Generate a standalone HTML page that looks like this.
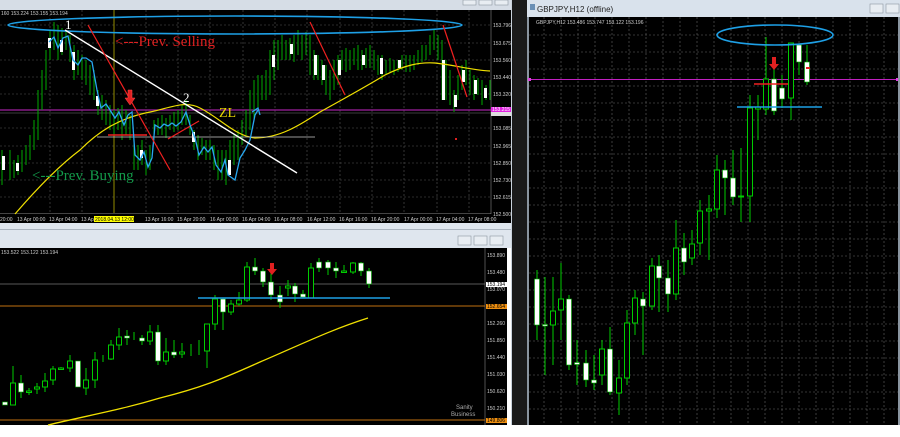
<!DOCTYPE html>
<html><head><meta charset="utf-8"><style>
html,body{margin:0;padding:0;background:#fff;width:900px;height:437px;overflow:hidden}
svg{display:block}
text{font-family:"Liberation Sans",sans-serif}
text.sf{font-family:"Liberation Serif",serif}
</style></head><body>
<svg width="900" height="437" viewBox="0 0 900 437" xmlns="http://www.w3.org/2000/svg">
<rect x="0" y="0" width="900" height="437" fill="#fff"/>
<rect x="0" y="0" width="527" height="10" fill="#d6dde6"/>
<rect x="0" y="10" width="491" height="204" fill="#000"/>
<rect x="491" y="10" width="20" height="213" fill="#000"/>
<rect x="0" y="213" width="491" height="10" fill="#000"/>
<rect x="511" y="0" width="16" height="425" fill="#c9d2dc"/>
<rect x="0" y="223" width="511" height="25" fill="#dfe6ee"/>
<rect x="0" y="229" width="511" height="1" fill="#aab4bf"/>
<g fill="#e8edf2" stroke="#8c96a0" stroke-width="0.6"><rect x="458" y="236" width="13" height="9"/><rect x="474" y="236" width="13" height="9"/><rect x="490" y="236" width="13" height="9"/>
<rect x="463" y="0" width="13" height="5"/><rect x="479" y="0" width="13" height="5"/><rect x="495" y="0" width="13" height="5"/></g>
<rect x="0" y="248" width="507" height="177" fill="#000"/>
<rect x="512" y="0" width="15" height="425" fill="#1a1a1a"/>
<rect x="527" y="0" width="373" height="17" fill="#d9e2ec"/>
<text x="537" y="12" font-size="8" fill="#222">GBPJPY,H12 (offline)</text>
<rect x="530" y="4" width="5" height="6" fill="#6a8fb5"/>
<rect x="870" y="4" width="13" height="9" fill="#e8edf2" stroke="#8c96a0" stroke-width="0.6"/>
<rect x="886" y="4" width="13" height="9" fill="#e8edf2" stroke="#8c96a0" stroke-width="0.6"/>
<rect x="527" y="17" width="373" height="408" fill="#000"/>
<rect x="527" y="17" width="2" height="408" fill="#8a95a0"/>

<g stroke="#555" stroke-width="0.6" stroke-dasharray="2,2">
<line x1="0" y1="25" x2="491" y2="25"/><line x1="0" y1="43" x2="491" y2="43"/><line x1="0" y1="60" x2="491" y2="60"/><line x1="0" y1="77" x2="491" y2="77"/><line x1="0" y1="94" x2="491" y2="94"/><line x1="0" y1="128" x2="491" y2="128"/><line x1="0" y1="146" x2="491" y2="146"/><line x1="0" y1="163" x2="491" y2="163"/><line x1="0" y1="180" x2="491" y2="180"/><line x1="0" y1="197" x2="491" y2="197"/>
<line x1="50" y1="10" x2="50" y2="213"/><line x1="82" y1="10" x2="82" y2="213"/><line x1="146" y1="10" x2="146" y2="213"/><line x1="178" y1="10" x2="178" y2="213"/><line x1="210" y1="10" x2="210" y2="213"/><line x1="243" y1="10" x2="243" y2="213"/><line x1="275" y1="10" x2="275" y2="213"/><line x1="307" y1="10" x2="307" y2="213"/><line x1="340" y1="10" x2="340" y2="213"/><line x1="372" y1="10" x2="372" y2="213"/><line x1="404" y1="10" x2="404" y2="213"/><line x1="437" y1="10" x2="437" y2="213"/><line x1="469" y1="10" x2="469" y2="213"/>
</g>
<line x1="491" y1="10" x2="491" y2="214" stroke="#888" stroke-width="0.6"/>
<line x1="0" y1="213.5" x2="491" y2="213.5" stroke="#888" stroke-width="0.6"/>
<text x="1" y="15" font-size="5" fill="#ccc">160 153.224 153.155 153.194</text>
<line x1="114" y1="10" x2="114" y2="213" stroke="#b8b000" stroke-width="0.8"/>
<g font-size="5" fill="#ccc">
<text x="493" y="27">153.796</text><text x="493" y="45">153.675</text><text x="493" y="62">153.560</text><text x="493" y="79">153.440</text><text x="493" y="96">153.320</text><text x="493" y="130">153.085</text><text x="493" y="148">152.965</text><text x="493" y="165">152.850</text><text x="493" y="182">152.730</text><text x="493" y="199">152.615</text><text x="493" y="216">152.500</text>
</g>
<rect x="491" y="107" width="20" height="5" fill="#e020e0"/>
<text x="492" y="111" font-size="5" fill="#fff">153.215</text>
<rect x="491" y="112" width="20" height="4" fill="#ddd"/>
<g font-size="5" fill="#ccc">
<text x="0" y="221">20:00</text><text x="17" y="221">13 Apr 00:00</text><text x="49" y="221">13 Apr 04:00</text><text x="81" y="221">13 Ap</text><text x="113" y="221">:00</text><text x="145" y="221">13 Apr 16:00</text><text x="177" y="221">15 Apr 20:00</text><text x="210" y="221">16 Apr 00:00</text><text x="242" y="221">16 Apr 04:00</text><text x="274" y="221">16 Apr 08:00</text><text x="307" y="221">16 Apr 12:00</text><text x="339" y="221">16 Apr 16:00</text><text x="371" y="221">16 Apr 20:00</text><text x="404" y="221">17 Apr 00:00</text><text x="436" y="221">17 Apr 04:00</text><text x="468" y="221">17 Apr 08:00</text>
</g>
<rect x="94" y="216" width="40" height="6" fill="#ffff00"/>
<text x="95" y="221" font-size="5" fill="#000">2018.04.13 12:00</text>

<line x1="0" y1="110" x2="491" y2="110" stroke="#a020a0" stroke-width="1.2"/>
<line x1="0" y1="113" x2="491" y2="113" stroke="#777" stroke-width="0.6"/>

<g stroke="#0a0" stroke-width="1">
<path d="M2 150V185M10 150V180M14 160V178M18 155V175M22 150V172M26 145V165M30 135V160M34 120V150M38 90V140M42 70V110M46 50V90M50 30V60M54 22V50M58 25V60M62 28V55M66 30V50M70 35V62M74 45V80M78 50V75M82 55V80M86 60V85M90 65V95M94 70V100M98 90V115M102 95V120M106 100V125M110 105V130M114 110V135M118 108V130M122 105V140M126 110V135M130 115V140M134 140V170M138 145V170M142 140V165M146 150V175M150 145V170M154 120V140M158 118V135M162 115V135M166 118V138M170 115V130M174 112V132M178 110V130M182 105V125M186 100V125M190 115V135M194 130V150M198 135V160M202 138V155M206 140V160M210 140V160M214 145V170M218 150V180M222 150V180M226 150V185M230 140V175M234 135V165M238 130V160M242 120V145M246 110V135M250 90V130M254 80V120M258 75V110M262 75V100M266 70V100M270 50V95M274 40V80M278 40V70M282 35V60M286 40V60M290 38V60M294 35V62M298 30V55M302 35V60M306 32V55M310 35V75M314 50V80M318 55V80M322 60V85M326 65V95M330 70V100M334 60V90M338 55V85M342 50V70M346 48V72M350 50V70M354 48V65M358 45V70M362 50V70M366 48V68M370 45V68M374 50V70M378 55V75M382 55V80M386 60V75M390 58V72M394 60V75M398 60V72M402 55V70M406 55V72M410 55V72M414 55V70M418 50V65M422 45V62M426 45V60M430 35V55M434 30V50M438 35V60M442 40V100M446 60V100M450 70V105M454 90V112M458 75V100M462 65V90M466 60V85M470 70V95M474 75V100M478 78V95M482 80V105M486 85V100M490 80V100"/>
</g>
<g fill="#fff">
<rect x="2" y="156" width="3" height="14"/><rect x="16" y="163" width="3" height="8"/><rect x="48" y="38" width="3" height="10"/><rect x="60" y="40" width="3" height="12"/><rect x="72" y="52" width="3" height="18"/><rect x="96" y="96" width="3" height="10"/><rect x="140" y="150" width="3" height="8"/><rect x="192" y="132" width="3" height="10"/><rect x="228" y="160" width="3" height="15"/><rect x="272" y="55" width="3" height="12"/><rect x="290" y="44" width="3" height="10"/><rect x="314" y="55" width="3" height="20"/><rect x="322" y="65" width="3" height="15"/><rect x="338" y="60" width="3" height="15"/><rect x="362" y="55" width="3" height="10"/><rect x="380" y="58" width="3" height="16"/><rect x="398" y="60" width="3" height="8"/><rect x="442" y="60" width="3" height="40"/><rect x="454" y="95" width="3" height="12"/><rect x="462" y="70" width="3" height="12"/><rect x="474" y="80" width="3" height="14"/><rect x="484" y="88" width="3" height="10"/>
</g>

<ellipse cx="235" cy="25" rx="227" ry="9" fill="none" stroke="#1ea0e6" stroke-width="1.6"/>
<path d="M15 214 C40 185 60 165 80 150 C100 130 120 118 150 112 C170 108 185 100 200 108 C220 118 235 136 255 138 C280 138 300 125 320 112 C345 98 360 90 385 75 C405 65 420 62 435 63 C455 65 470 70 490 71" fill="none" stroke="#f0e000" stroke-width="1.2"/>
<line x1="97" y1="137" x2="315" y2="137" stroke="#ccc" stroke-width="0.8"/>
<line x1="108" y1="135" x2="147" y2="135" stroke="#f02020" stroke-width="1.4"/>
<line x1="168" y1="139" x2="199" y2="121" stroke="#f02020" stroke-width="1.2"/>
<path d="M49 42L54 37L58 48L63 38L68 36L73 60L78 65L82 58L86 58L92 62L97 90L101 108L106 104L110 110L115 118L119 112L124 125L128 115L132 112L135 155L140 160L144 152L148 167L152 158L155 125L160 128L164 124L168 126L172 123L176 126L181 122L186 112L190 125L195 138L199 155L204 147L208 152L212 147L216 165L221 172L225 160L228 175L235 180L240 158L245 150L250 140L255 115L258 110" fill="none" stroke="#28a8f0" stroke-width="1.3"/>
<path d="M252 112L258 108L260 115" fill="none" stroke="#28a8f0" stroke-width="1.3"/>
<line x1="65" y1="30" x2="297" y2="173" stroke="#fff" stroke-width="1.4"/>
<g stroke="#f02020" stroke-width="1.2" fill="none">
<path d="M88 25L170 170"/><path d="M310 22L345 95"/><path d="M443 25L467 97"/>
</g>
<path d="M128 90h4v8h3l-5 7l-5-7h3z" fill="#e02020" stroke="#ff5050" stroke-width="0.5"/>
<text class="sf" x="65" y="29" font-size="13" fill="#fff">1</text>
<text class="sf" x="183" y="102" font-size="13" fill="#fff">2</text>
<text class="sf" x="115" y="46" font-size="15" fill="#e02020">&lt;---Prev. Selling</text>
<text class="sf" x="32" y="180" font-size="15" fill="#139a4a">&lt;---Prev. Buying</text>
<text class="sf" x="219" y="117" font-size="14" fill="#e8d800">ZL</text>
<rect x="455" y="138" width="2" height="2" fill="#e02020"/>

<g font-size="5" fill="#ccc">
<text x="1" y="254">153.522 153.122 153.194</text>
<text x="487" y="257">153.890</text><text x="487" y="274">153.480</text><text x="487" y="291">153.070</text><text x="487" y="325">152.260</text><text x="487" y="342">151.850</text><text x="487" y="359">151.440</text><text x="487" y="376">151.030</text><text x="487" y="393">150.620</text><text x="487" y="410">150.210</text>
</g>
<line x1="485" y1="248" x2="485" y2="425" stroke="#888" stroke-width="0.6"/>
<line x1="0" y1="284" x2="485" y2="284" stroke="#777" stroke-width="0.7"/>
<line x1="0" y1="306" x2="485" y2="306" stroke="#c07010" stroke-width="0.9"/>
<line x1="0" y1="420" x2="485" y2="420" stroke="#c07010" stroke-width="0.9"/>
<rect x="486" y="282" width="21" height="5" fill="#fff"/><text x="487" y="286" font-size="5" fill="#000">153.194</text>
<rect x="486" y="304" width="21" height="5" fill="#f09010"/><text x="487" y="308" font-size="5" fill="#000">152.654</text>
<rect x="486" y="418" width="21" height="5" fill="#f09010"/><text x="487" y="422" font-size="5" fill="#000">149.806</text>
<path d="M48 425 C90 415 120 410 160 398 C200 388 220 380 260 362 C300 345 330 330 368 318" fill="none" stroke="#f0e000" stroke-width="1.3"/>
<g stroke="#0c0" stroke-width="1" fill="#000">
<path d="M13 366V405M21 375V398M29 388V395M37 383V394M45 373V392M53 366V385M61 367V370M70 355V372M86 368V395M95 352V388M103 355V362M111 340V360M119 328V350M127 330V345M134 332V340M142 335V345M150 325V345M158 325V365M166 338V365M174 340V358M182 343V358M191 344V356M199 340V355M207 330V368M215 295V330M223 298V330M231 300V315M239 292V306M247 262V302M255 258V275M263 268V287M271 272V300M280 286V308M288 280V296M295 283V302M303 290V298M311 263V298M319 258V272M328 260V275M336 262V278M344 265V273M353 262V274M361 262V276M369 268V288"/>
<rect x="10.5" y="383" width="5" height="22"/><rect x="26.5" y="391" width="5" height="1.5"/><rect x="34.5" y="387" width="5" height="2"/><rect x="42.5" y="381" width="5" height="6"/><rect x="50.5" y="369" width="5" height="11"/><rect x="58.5" y="368" width="5" height="1.5"/><rect x="67.5" y="361" width="5" height="7"/><rect x="83.5" y="380" width="5" height="8"/><rect x="92.5" y="360" width="5" height="20"/><rect x="108.5" y="345" width="5" height="14"/><rect x="116.5" y="337" width="5" height="8"/><rect x="147.5" y="332" width="5" height="9"/><rect x="163.5" y="352" width="5" height="9"/><rect x="179.5" y="352" width="5" height="2"/><rect x="204.5" y="324" width="5" height="27"/><rect x="212.5" y="299" width="5" height="25"/><rect x="228.5" y="304" width="5" height="8"/><rect x="236.5" y="300" width="5" height="4"/><rect x="244.5" y="267" width="5" height="33"/><rect x="285.5" y="286" width="5" height="2"/><rect x="308.5" y="268" width="5" height="30"/><rect x="341.5" y="271" width="5" height="1.5"/><rect x="350.5" y="263" width="5" height="9"/>
</g>
<g fill="#fff" stroke="#0a0" stroke-width="0.6">
<rect x="2.5" y="402" width="5" height="3"/><rect x="18.5" y="383" width="5" height="9"/><rect x="75.5" y="361" width="5" height="26"/><rect x="124.5" y="336" width="5" height="2"/><rect x="139.5" y="338" width="5" height="3"/><rect x="155.5" y="332" width="5" height="29"/><rect x="171.5" y="352" width="5" height="3"/><rect x="220.5" y="299" width="5" height="13"/><rect x="252.5" y="267" width="5" height="4"/><rect x="260.5" y="271" width="5" height="11"/><rect x="268.5" y="282" width="5" height="13"/><rect x="277.5" y="295" width="5" height="7"/><rect x="292.5" y="286" width="5" height="8"/><rect x="300.5" y="294" width="5" height="3"/><rect x="316.5" y="262" width="5" height="6"/><rect x="325.5" y="262" width="5" height="6"/><rect x="333.5" y="268" width="5" height="3"/><rect x="358.5" y="263" width="5" height="8"/><rect x="366.5" y="271" width="5" height="13"/>
</g>
<line x1="198" y1="298" x2="390" y2="298" stroke="#1ea0e6" stroke-width="1.4"/>
<path d="M270 263h4v6h3l-5 6l-5-6h3z" fill="#e02020"/>
<text x="456" y="409" font-size="6" fill="#aaa">Sanity</text>
<text x="451" y="416" font-size="6" fill="#aaa">Business</text>

<g stroke="#666" stroke-width="0.6" stroke-dasharray="2,2">
<line x1="529" y1="35" x2="898" y2="35"/><line x1="529" y1="52" x2="898" y2="52"/><line x1="529" y1="69" x2="898" y2="69"/><line x1="529" y1="86" x2="898" y2="86"/><line x1="529" y1="103" x2="898" y2="103"/><line x1="529" y1="120" x2="898" y2="120"/><line x1="529" y1="137" x2="898" y2="137"/><line x1="529" y1="154" x2="898" y2="154"/><line x1="529" y1="171" x2="898" y2="171"/><line x1="529" y1="188" x2="898" y2="188"/><line x1="529" y1="205" x2="898" y2="205"/><line x1="529" y1="222" x2="898" y2="222"/><line x1="529" y1="239" x2="898" y2="239"/><line x1="529" y1="256" x2="898" y2="256"/><line x1="529" y1="273" x2="898" y2="273"/><line x1="529" y1="290" x2="898" y2="290"/><line x1="529" y1="307" x2="898" y2="307"/><line x1="529" y1="324" x2="898" y2="324"/><line x1="529" y1="341" x2="898" y2="341"/><line x1="529" y1="358" x2="898" y2="358"/><line x1="529" y1="375" x2="898" y2="375"/><line x1="529" y1="392" x2="898" y2="392"/><line x1="529" y1="409" x2="898" y2="409"/>
<line x1="544" y1="17" x2="544" y2="425"/><line x1="561" y1="17" x2="561" y2="425"/><line x1="578" y1="17" x2="578" y2="425"/><line x1="595" y1="17" x2="595" y2="425"/><line x1="612" y1="17" x2="612" y2="425"/><line x1="629" y1="17" x2="629" y2="425"/><line x1="646" y1="17" x2="646" y2="425"/><line x1="663" y1="17" x2="663" y2="425"/><line x1="680" y1="17" x2="680" y2="425"/><line x1="697" y1="17" x2="697" y2="425"/><line x1="714" y1="17" x2="714" y2="425"/><line x1="731" y1="17" x2="731" y2="425"/><line x1="748" y1="17" x2="748" y2="425"/><line x1="765" y1="17" x2="765" y2="425"/><line x1="782" y1="17" x2="782" y2="425"/><line x1="799" y1="17" x2="799" y2="425"/><line x1="816" y1="17" x2="816" y2="425"/><line x1="833" y1="17" x2="833" y2="425"/><line x1="850" y1="17" x2="850" y2="425"/><line x1="867" y1="17" x2="867" y2="425"/><line x1="884" y1="17" x2="884" y2="425"/>
</g>
<text x="536" y="24" font-size="5" fill="#ccc">GBPJPY,H12  153.486 153.747 153.122 153.196</text>
<line x1="529" y1="79.5" x2="898" y2="79.5" stroke="#c020c0" stroke-width="1"/>
<rect x="528" y="78" width="3" height="3" fill="#e040e0"/><rect x="896" y="78" width="3" height="3" fill="#e040e0"/>
<g stroke="#0c0" stroke-width="1" fill="#000">
<path d="M537 270V340M545 277V375M553 277V365M561 263V340M569 295V370M577 340V385M586 350V387M594 355V390M602 340V385M610 327V395M619 360V415M627 310V385M635 290V335M643 292V355M652 258V310M659 255V312M668 260V312M676 220V300M684 233V275M692 230V265M700 200V255M709 195V260M717 155V218M725 160V215M733 150V205M741 148V222M750 95V222M758 95V140M766 37V115M774 60V115M782 75V108M791 43V120M799 45V75M807 45V85"/>
<rect x="550.5" y="311" width="5" height="14"/><rect x="558.5" y="299" width="5" height="11"/><rect x="599.5" y="349" width="5" height="26"/><rect x="616.5" y="378" width="5" height="15"/><rect x="624.5" y="323" width="5" height="55"/><rect x="632.5" y="298" width="5" height="25"/><rect x="649.5" y="266" width="5" height="40"/><rect x="673.5" y="248" width="5" height="46"/><rect x="689.5" y="244" width="5" height="14"/><rect x="697.5" y="211" width="5" height="32"/><rect x="706.5" y="209" width="5" height="2"/><rect x="714.5" y="170" width="5" height="39"/><rect x="738.5" y="196" width="5" height="1"/><rect x="747.5" y="108" width="5" height="88"/><rect x="755.5" y="107" width="5" height="2"/><rect x="763.5" y="79" width="5" height="30"/><rect x="788.5" y="43" width="5" height="55"/>
</g>
<g fill="#fff" stroke="#0a0" stroke-width="0.6">
<rect x="534.5" y="279" width="5" height="46"/><rect x="542.5" y="324.5" width="5" height="1.5"/><rect x="566.5" y="299" width="5" height="66"/><rect x="574.5" y="362.5" width="5" height="2"/><rect x="583.5" y="363" width="5" height="17"/><rect x="591.5" y="380" width="5" height="3"/><rect x="607.5" y="349" width="5" height="43"/><rect x="640.5" y="299" width="5" height="7"/><rect x="656.5" y="266" width="5" height="12"/><rect x="665.5" y="278" width="5" height="16"/><rect x="681.5" y="248" width="5" height="14"/><rect x="722.5" y="170" width="5" height="8"/><rect x="730.5" y="178" width="5" height="19"/><rect x="771.5" y="79" width="5" height="32"/><rect x="779.5" y="88" width="5" height="11"/><rect x="796.5" y="45" width="5" height="17"/><rect x="804.5" y="62" width="5" height="20"/>
</g>
<ellipse cx="775" cy="35" rx="58" ry="10" fill="none" stroke="#1ea0e6" stroke-width="1.6"/>
<line x1="754" y1="84" x2="788" y2="84" stroke="#f02020" stroke-width="1.6"/>
<line x1="737" y1="107" x2="822" y2="107" stroke="#1ea0e6" stroke-width="1.4"/>
<path d="M772 57h4v7h3l-5 6l-5-6h3z" fill="#e02020"/>
<rect x="806" y="67" width="4" height="2" fill="#e02020"/>
<rect x="898" y="17" width="2" height="408" fill="#8a95a0"/>
</svg>
</body></html>
